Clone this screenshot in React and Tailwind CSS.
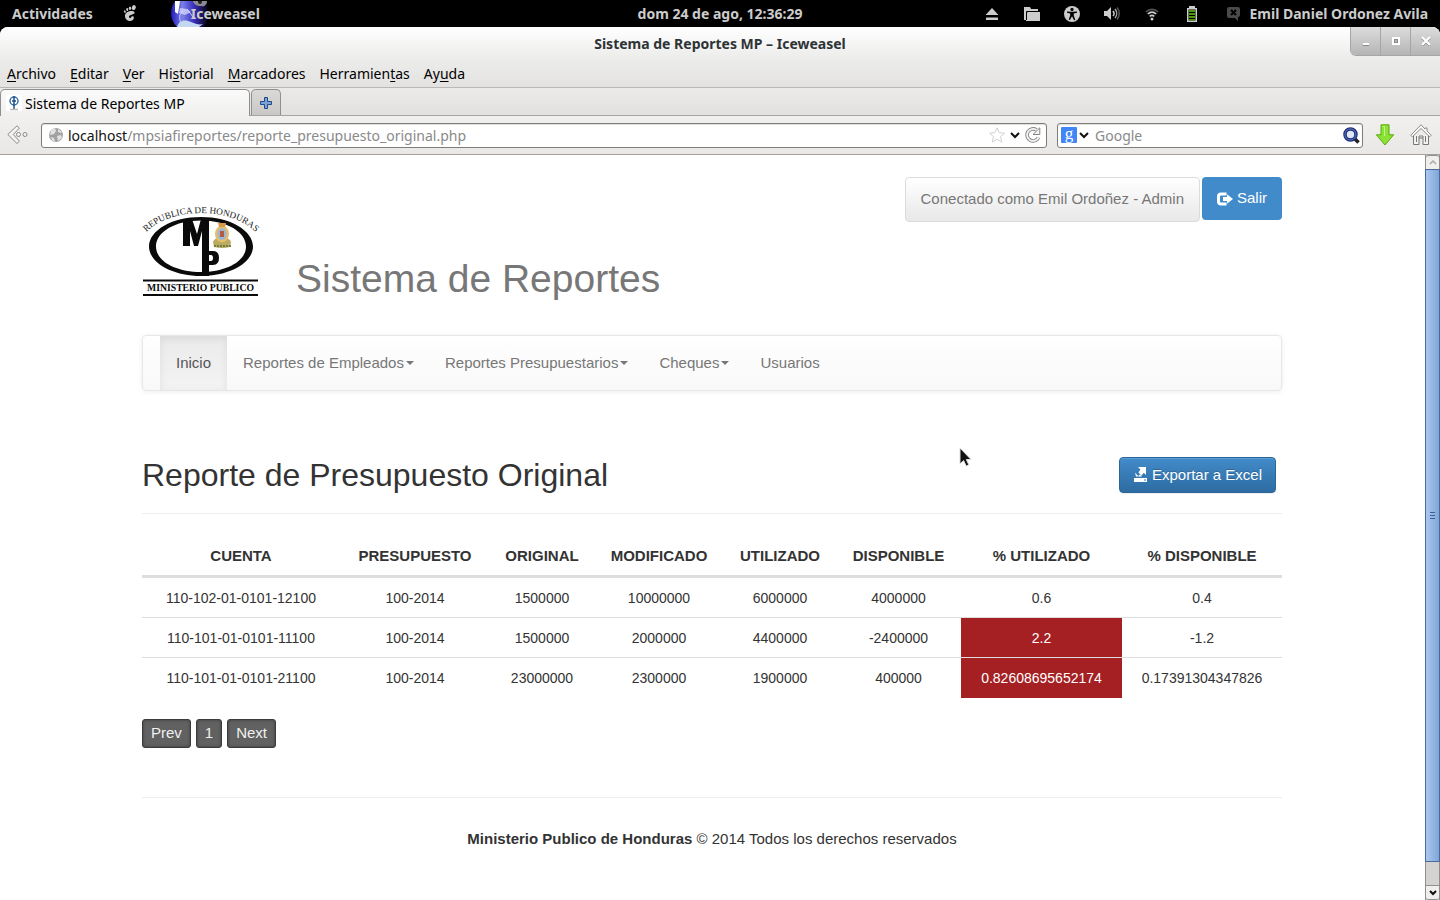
const uiFont = "font-['Noto_Sans',sans-serif]";

function FootIcon() {
  return (
    <svg width="14" height="17" viewBox="0 0 14 17" fill="#ccc" aria-hidden="true">
      <ellipse cx="10.800" cy="2.600" rx="1.900" ry="2.500" transform="rotate(20 10.800 2.600)" />
      <ellipse cx="7" cy="3.200" rx="1.200" ry="1.800" />
      <ellipse cx="4.200" cy="4.600" rx="1" ry="1.500" transform="rotate(-15 4.200 4.600)" />
      <ellipse cx="1.900" cy="6.600" rx=".9" ry="1.300" transform="rotate(-25 1.900 6.600)" />
      <path d="M8.500 6C4.500 6 1.600 8.400 2 11.500c.3 2.800 2.400 4.600 4.900 4.600 2.300 0 4.200-1.600 4-3.500-.1-1-.9-1.500-1.700-1.300-1 .2-.8 1.700-2 1.700-1 0-1.500-.9-1.100-1.700.6-1.300 5.500-1.700 5.500-3.700C11.600 6.500 10.300 6 8.500 6z" />
    </svg>
  );
}

function IceweaselIcon() {
  return (
    <svg width="38" height="26" viewBox="0 0 38 26" aria-hidden="true">
      <defs>
        <linearGradient id="globe" x1="0" y1="0" x2="1" y2="0">
          <stop offset="0" stopColor="#2018b8" />
          <stop offset=".3" stopColor="#7a80e6" />
          <stop offset=".6" stopColor="#3a30c0" />
          <stop offset="1" stopColor="#000" />
        </linearGradient>
      </defs>
      <circle cx="19" cy="12" r="19" fill="url(#globe)" />
      <path d="M4 0h5L7 13l-3-2z" fill="#fff" />
      <path d="M6 26c2-7 8-8 14-5 5 2 8 3 12 2l-4 3z" fill="#c4d8f4" />
      <path d="M9 7l7 1 4 3-6 3-6-2z" fill="#dfe2ff" opacity=".7" />
      <path d="M22 0h14c0 4-3 6-6 5-4 0-7-1-8-5z" fill="#8a8a90" />
      <circle cx="29" cy="1" r="2" fill="#222" />
      <path d="M10 22c-2-5-2-9 2-12M16 8l6 8" stroke="#cfd0ff" strokeWidth="1" fill="none" />
    </svg>
  );
}

function TrayIcons() {
  return (
    <div className="flex items-center gap-6" aria-hidden="true">
      <svg width="16" height="16" viewBox="0 0 16 16" fill="#ccc"><path d="M8 2l6.500 7h-13zM2 11.500h12v2.500H2z" /></svg>
      <svg width="16" height="16" viewBox="0 0 16 16" fill="#ccc"><path d="M0 1h6l1 2h7v2H3v9H0z" /><path d="M4 6h12v9H2V7l2-1z" /><path d="M2.500 14V5.500H14" stroke="#000" fill="none" /></svg>
      <svg width="16" height="16" viewBox="0 0 16 16"><circle cx="8" cy="8" r="8" fill="#ccc" /><circle cx="8" cy="3.400" r="1.600" /><path d="M3 5.500l4 .3h2l4-.3v1.200l-3.200.8v2.300l1.500 4-1.200.5L8 10.300l-2.100 3.800-1.200-.5 1.500-4V7.500L3 6.700z" /></svg>
      <svg width="16" height="16" viewBox="0 0 16 16" fill="#ccc"><path d="M0 5h3l4-4v13l-4-4H0z" /><path d="M9 5c1.300 1.600 1.300 3.600 0 5" stroke="#ccc" strokeWidth="1.500" fill="none" /><path d="M11 3c2.200 2.600 2.200 6.400 0 9" stroke="#aaa" strokeWidth="1.500" fill="none" /><path d="M13 1.500c3 3.400 3 8.600 0 12" stroke="#555" strokeWidth="1.500" fill="none" /></svg>
      <svg width="16" height="16" viewBox="0 0 16 16" fill="none" strokeWidth="1.700"><path d="M2 6c3.500-3.600 8.500-3.600 12 0" stroke="#555" /><path d="M3.800 8c2.500-2.400 5.900-2.400 8.400 0" stroke="#ccc" /><path d="M5.700 10.300c1.500-1.200 3.100-1.200 4.600 0" stroke="#ccc" /><circle cx="8" cy="13" r="1.500" fill="#ccc" /></svg>
      <svg width="16" height="16" viewBox="0 0 16 16"><path d="M5 0h6v2h2v14H3V2h2z" fill="#ccc" /><path d="M4.500 3.500h7v11h-7z" fill="#000" /><path d="M5 4h6v2H5zM5 7h6v2H5zM5 10h6v2H5zM5 13h6v1.500H5z" fill="#4e9a06" /></svg>
    </div>
  );
}

function TopBar() {
  return (
    <header className={`flex h-[27px] items-center bg-black text-[14px] font-bold text-[#ccc] ${uiFont}`}>
      <div className="flex flex-1 items-center pl-3">
        <button type="button">Actividades</button>
        <span className="ml-[30px]"><FootIcon /></span>
        <button type="button" className="relative ml-[34px] flex h-[26px] items-center pl-5">
          <span className="absolute top-0 left-0"><IceweaselIcon /></span>
          <span className="relative">Iceweasel</span>
        </button>
      </div>
      <time>dom 24 de ago, 12:36:29</time>
      <div className="flex flex-1 items-center justify-end pr-3">
        <TrayIcons />
        <button type="button" className="ml-[26px] flex items-center gap-2">
          <svg width="16" height="16" viewBox="0 0 16 16" aria-hidden="true"><path d="M3 1h9q2 0 2 2v6q0 2-2 2v4l-3-3H3q-2 0-2-2V3q0-2 2-2z" fill="#4a4a4a" /><path d="M5 4l5 5M10 4l-5 5" stroke="#000" strokeWidth="2" /></svg>
          Emil Daniel Ordonez Avila
        </button>
      </div>
    </header>
  );
}

function TitleBar() {
  const btn = "flex h-7 w-[30px] items-center justify-center border-l border-[#a5a5a5] bg-linear-to-b from-[#dcdcdc] to-[#b5b5b5]";
  return (
    <div className="flex items-start">
      <div className="flex-1" />
      <h1 className="pt-2 text-[14px] leading-[18px] font-bold text-[#2e3436]">Sistema de Reportes MP – Iceweasel</h1>
      <div className="flex flex-1 justify-end">
        <div className="flex overflow-hidden rounded-bl-md border-b border-[#a5a5a5]">
          <button type="button" aria-label="Minimizar" className={btn}><svg width="10" height="10"><path d="M2 7h6v2H2z" fill="#fff" /><path d="M2 9h6v1H2z" fill="#888" /></svg></button>
          <button type="button" aria-label="Maximizar" className={btn}><svg width="10" height="10"><path d="M2 2h6v6H2z" fill="#8a8a8a" stroke="#fff" strokeWidth="2" /><path d="M4 4h2v2H4z" fill="#b5b5b5" /></svg></button>
          <button type="button" aria-label="Cerrar" className={btn}><svg width="10" height="10"><path d="M1 2l8 8M9 2L1 10" stroke="#8a8a8a" strokeWidth="2" /><path d="M1 1l8 8M9 1L1 9" stroke="#fff" strokeWidth="2.200" /></svg></button>
        </div>
      </div>
    </div>
  );
}

const menus = [["", "A", "rchivo"], ["", "E", "ditar"], ["", "V", "er"], ["Hi", "s", "torial"], ["", "M", "arcadores"], ["Herramien", "t", "as"], ["Ay", "u", "da"]];

function MenuBar() {
  return (
    <nav aria-label="Menú" className="flex h-[28px] items-center gap-[14px] pl-[7px] text-[14px] text-black">
      {menus.map(([a, b, c]) => (
        <button type="button" key={a + b + c}>{a}<span className="underline underline-offset-2">{b}</span>{c}</button>
      ))}
    </nav>
  );
}

function TabStrip() {
  return (
    <div className="flex h-[29px] items-end border-t border-b border-t-[#b8b8b6] border-b-[#a5a5a3] bg-linear-to-b from-[#ebeae9] to-[#e2e1df]">
      <button type="button" className="-mb-px flex h-[27px] w-[250px] items-center gap-[3px] rounded-t-[5px] border border-b-0 border-[#8f8f8d] bg-linear-to-b from-[#fafafa] to-[#f1f0ef] pl-[5px] text-[14px] text-black">
        <svg width="16" height="16" viewBox="0 0 16 16" aria-hidden="true"><rect width="16" height="16" fill="#fff" /><circle cx="8" cy="6" r="4" fill="none" stroke="#3a6ea5" strokeWidth="1.500" /><path d="M8 1v9M6 6h4M8 10v4" stroke="#1d4f88" strokeWidth="1.500" /><path d="M4 14.500h8" stroke="#bbb" strokeWidth="1.500" /></svg>
        Sistema de Reportes MP
      </button>
      <button type="button" aria-label="Nueva pestaña" className="ml-px flex h-[26px] w-[30px] items-center justify-center rounded-t-[5px] border border-b-0 border-[#8f8f8d] bg-linear-to-b from-[#dad9d8] to-[#c9c8c7]">
        <svg width="12" height="12" viewBox="0 0 12 12"><path d="M4.500.5h3v4h4v3h-4v4h-3v-4h-4v-3h4z" fill="#7ba2d6" stroke="#204a87" /></svg>
      </button>
    </div>
  );
}

function ChevronDown() {
  return <svg width="10" height="7" viewBox="0 0 10 7" aria-hidden="true"><path d="M1 1l4 4 4-4" fill="none" stroke="#111" strokeWidth="2" /></svg>;
}

function NavBar() {
  const box = "flex h-[25px] items-center rounded-[3px] border border-[#7d7d7b] bg-white shadow-[inset_0_1px_1px_#ddd]";
  return (
    <div className="flex h-[39px] items-center border-b border-[#a5a09c] bg-linear-to-b from-[#f1f0ef] to-[#e9e8e6] pl-[7px] text-[14px]">
      <button type="button" aria-label="Atrás">
        <svg width="22" height="20" viewBox="0 0 22 20"><path d="M10 .8L.8 9.500l9.200 9 2.400-2.300-6.200-6.700 6.200-6.400z" fill="#f4f4f3" stroke="#8a8a88" /><circle cx="11.500" cy="9.500" r="2" fill="#f4f4f3" stroke="#8a8a88" /><circle cx="18" cy="9.500" r="2" fill="#f4f4f3" stroke="#8a8a88" /></svg>
      </button>
      <div className={`${box} ml-3 flex-1 pr-[5px] pl-[6px]`}>
        <svg width="16" height="16" viewBox="0 0 16 16" aria-hidden="true"><circle cx="8" cy="8" r="7" fill="#a2a2a2" /><path d="M3 3l4-2 1 3-2 3-4 1zM9 9l4-1 1 3-4 3zM10 2l4 3-1 1-3-1zM3 10l3 1 1 4-3-2z" fill="#e2e2e2" /></svg>
        <a href="#url" className="ml-1 flex-1 truncate text-[#8a8a8a]"><span className="text-[#111]">localhost</span>/mpsiafireportes/reporte_presupuesto_original.php</a>
        <svg width="16" height="16" viewBox="0 0 16 16" aria-hidden="true"><path d="M8 .8l2.200 4.900 5.300.5-4 3.500 1.300 5.400L8 12.300l-4.800 2.800 1.300-5.400-4-3.500 5.300-.5z" fill="#fff" stroke="#d0d0d0" /></svg>
        <span className="ml-[5px]"><ChevronDown /></span>
        <svg className="ml-[5px]" width="16" height="16" viewBox="0 0 16 16" aria-hidden="true"><path d="M13.500 10.500A6 6 0 1 1 11.500 3" fill="none" stroke="#858585" strokeWidth="3.600" /><path d="M13.500 10.500A6 6 0 1 1 11.500 3" fill="none" stroke="#f4f4f4" strokeWidth="1.800" /><path d="M14.800.8v6.700H8z" fill="#f4f4f4" stroke="#858585" /></svg>
      </div>
      <div className={`${box} mr-[11px] ml-[10px] w-[306px] pr-[2px] pl-[3px]`}>
        <span className="flex h-4 w-4 items-center justify-center rounded-[1px] bg-[#4285f4] pb-1 font-['Liberation_Serif',serif] text-[17px] leading-none text-white">g</span>
        <span className="ml-[2px]"><ChevronDown /></span>
        <input aria-label="Buscar" placeholder="Google" className="ml-[6px] min-w-0 flex-1 outline-none placeholder:text-[#8a8a8a]" />
        <svg width="17" height="17" viewBox="0 0 17 17" aria-hidden="true"><path d="M11 11l4.500 4.500" stroke="#222" strokeWidth="3.500" /><circle cx="7.500" cy="7.500" r="5.500" fill="#dfe6f6" stroke="#1c2a6b" strokeWidth="3.500" /><circle cx="7.500" cy="7.500" r="5.500" fill="none" stroke="#4a66b8" strokeWidth="1.300" /></svg>
      </div>
      <button type="button" aria-label="Descargas" className="ml-px">
        <svg width="20" height="22" viewBox="0 0 20 22"><path d="M6 .8h8v10h4.700L10 21 1.300 10.800H6z" fill="#8ae234" stroke="#5aa90c" /><path d="M7.500 2.500h2V12" fill="none" stroke="#c5f58f" /></svg>
      </button>
      <button type="button" aria-label="Inicio" className="mr-2 ml-[15px]">
        <svg width="22" height="22" viewBox="0 0 22 22"><path d="M3.500 11v9.500H9V14h4v6.500h5.500V11" fill="#f2f2f1" stroke="#777" /><path d="M6.500 18v-6M15.500 18v-6M9 14v-2h4v2" fill="none" stroke="#777" /><path d="M11 .8L.8 11.300l1.500 1.500L11 4.500l8.700 8.300 1.500-1.500L17 7V4h-2v1z" fill="#fafafa" stroke="#8c8c8c" /></svg>
      </button>
    </div>
  );
}

function Logo() {
  return (
    <svg width="120" height="96" viewBox="0 0 120 96" role="img" aria-label="Ministerio Publico, Republica de Honduras">
      <defs><path id="arc" d="M2 37C26 5 96 5 120 37" /></defs>
      <text fontFamily="Liberation Serif, serif" fontSize="9.200" fill="#222" textAnchor="middle">
        <textPath href="#arc" startOffset="50%">REPUBLICA DE HONDURAS</textPath>
      </text>
      <path fillRule="evenodd" fill="#0a0a0a" d="M61 17c29 0 52 13.500 52 29.500S90 76 61 76 9 62.500 9 46.500 32 17 61 17zm0 3.500c-26 0-45 11.500-45 26S35 72 61 72s45-11 45-25.500-19-26-45-26z" />
      <path fill="#0a0a0a" d="M43 19h9l5 15 4-15h8v57h-7V31l-4 15h-4l-4-15v15h-7z" />
      <path fill="#0a0a0a" fillRule="evenodd" d="M66 51h7q6 0 6 7t-6 7h-7v-4h5q2 0 2-3t-2-3h-5z" />
      <g>
        <path d="M73 42q2-5 6-3l3 3 3-3q4-2 6 3l-1 5q-8 2-16 0z" fill="#b9ab62" />
        <ellipse cx="82" cy="34" rx="7" ry="8.500" fill="#e3bf6c" />
        <ellipse cx="82" cy="34" rx="4.500" ry="6" fill="#9db6d3" />
        <path d="M80 31h4v6h-4z" fill="#b55a45" />
        <path d="M78 23h8l-1 4h-6z" fill="#d79b48" />
        <path d="M74 46h17" stroke="#718042" strokeWidth="2" strokeDasharray="2 1" />
      </g>
      <path d="M3 80.500h115M3 95h115" stroke="#0a0a0a" strokeWidth="2" />
      <text x="60.500" y="91" textAnchor="middle" fontFamily="Liberation Serif, serif" fontWeight="700" fontSize="9.700" fill="#0a0a0a">MINISTERIO PUBLICO</text>
    </svg>
  );
}

function Caret() {
  return <span className="ml-[2px] inline-block border-x-4 border-t-4 border-x-transparent border-t-[#777] align-middle" />;
}

const links = [["Reportes de Empleados", true], ["Reportes Presupuestarios", true], ["Cheques", true], ["Usuarios", false]];

function SiteNav() {
  return (
    <nav aria-label="Principal" className="mt-[39px] flex h-14 gap-px rounded border border-[#e7e7e7] bg-linear-to-b from-white to-[#f8f8f8] pl-[17px] text-[15px] text-[#777] shadow-[0_1px_5px_rgba(0,0,0,0.075)]">
      <a href="#inicio" className="flex items-center bg-linear-to-b from-[#ebebeb] to-[#f3f3f3] px-4 text-[#555] shadow-[inset_0_3px_9px_rgba(0,0,0,0.075)]">Inicio</a>
      {links.map(([label, caret]) => (
        <a key={label} href="#menu" className="flex items-center px-[15px]">{label}{caret && <Caret />}</a>
      ))}
    </nav>
  );
}

const columns = [
  ["CUENTA", "w-[198px]"], ["PRESUPUESTO", "w-[150px]"], ["ORIGINAL", "w-[104px]"], ["MODIFICADO", "w-[130px]"],
  ["UTILIZADO", "w-[112px]"], ["DISPONIBLE", "w-[125px]"], ["% UTILIZADO", "w-[161px]"], ["% DISPONIBLE", "w-[160px]"],
];
const rows = [
  ["110-102-01-0101-12100", "100-2014", "1500000", "10000000", "6000000", "4000000", "0.6", "0.4"],
  ["110-101-01-0101-11100", "100-2014", "1500000", "2000000", "4400000", "-2400000", "2.2", "-1.2"],
  ["110-101-01-0101-21100", "100-2014", "23000000", "2300000", "1900000", "400000", "0.82608695652174", "0.17391304347826"],
];

function Report() {
  return (
    <section>
      <div className="mt-[62px] flex items-center justify-between border-b border-[#eee] pr-[6px] pb-[16px]">
        <h2 className="text-[32px] leading-[44px] text-[#333]">Reporte de Presupuesto Original</h2>
        <button type="button" className="flex h-9 items-center gap-1 rounded border border-[#2b669a] bg-linear-to-b from-[#428bca] to-[#2d6ca2] px-[13px] text-[15px] text-white shadow-[inset_0_1px_0_rgba(255,255,255,0.15),0_1px_1px_rgba(0,0,0,0.075)] text-shadow-[0_-1px_0_rgba(0,0,0,0.2)]">
          <svg width="15" height="16" viewBox="0 0 15 16" fill="#fff" aria-hidden="true"><path d="M5 0h8v8l-2.200-2.200-2.300 2.700-3-3L7.500 2.500zM2 5.500L5.500 9.500H3zM1 11h13v4H1zM5 9l2-1.500L9 9.500H6z" /><path d="M11 12.500h2v1h-2z" fill="#3a78b0" /></svg>
          Exportar a Excel
        </button>
      </div>
      <table className="mt-[21px] w-full table-fixed border-collapse text-center text-[14px] leading-5 text-[#333]">
        <thead>
          <tr className="border-b-[3px] border-[#ddd] text-[15px]">
            {columns.map(([name, width]) => <th key={name} scope="col" className={`${width} pt-[11px] pb-[9px] font-bold`}>{name}</th>)}
          </tr>
        </thead>
        <tbody>
          {rows.map((row, r) => (
            <tr key={row[0]} className="h-10 border-b border-[#ddd] first:h-[41px] last:border-b-0">
              {row.map((cell, c) => <td key={c} className={c === 6 && r > 0 ? "bg-[#a52022] text-white" : ""}>{cell}</td>)}
            </tr>
          ))}
        </tbody>
      </table>
      <div className="mt-[21px] flex gap-[5px] text-[15px] text-[#f0f0f0]">
        {["Prev", "1", "Next"].map((t) => (
          <button type="button" key={t} className="h-[29px] rounded-[3px] border border-[#3b3b3b] bg-[#616161] px-2 shadow-[inset_0_0_3px_rgba(0,0,0,0.4)]">{t}</button>
        ))}
      </div>
    </section>
  );
}

function Page() {
  return (
    <main className="flex-1 bg-white pr-px font-['Liberation_Sans',Arial,sans-serif]">
      <div className="mx-auto max-w-[1140px] pt-[22px]">
        <header className="flex items-start justify-between">
          <div className="flex items-end pt-[23px] text-[#777]">
            <div className="-ml-[2px]"><Logo /></div>
            <h1 className="ml-9 text-[39px] leading-[34px]">Sistema de Reportes</h1>
          </div>
          <div className="flex items-start gap-[2px] text-[15px]">
            <p className="flex h-[45px] items-center rounded border border-[#dcdcdc] bg-linear-to-b from-white to-[#e8e8e8] px-[15px] text-[#777]">Conectado como Emil Ordoñez - Admin</p>
            <a href="#salir" className="flex h-[43px] items-center gap-1 rounded bg-[#428bca] px-[15px] text-white">
              <svg width="16" height="14" viewBox="0 0 16 14" aria-hidden="true"><path d="M9.500 2H4Q1.500 2 1.500 4.500v5Q1.500 12 4 12h5.500" fill="none" stroke="#fff" strokeWidth="3" /><path d="M6 5h4V2.200L16 7l-6 4.800V9H6z" fill="#fff" /></svg>
              Salir
            </a>
          </div>
        </header>
        <SiteNav />
        <Report />
        <footer className="mt-[49px] border-t border-[#eee] pt-[30px] text-center text-[15px] leading-[21px] text-[#333]">
          <strong>Ministerio Publico de Honduras</strong> © 2014 Todos los derechos reservados
        </footer>
      </div>
    </main>
  );
}

function ScrollBar() {
  return (
    <div className="flex w-[15px] flex-col border-x border-[#8f8f8d] bg-[#d4d3d2]" aria-hidden="true">
      <div className="flex h-[14px] items-center justify-center rounded-t-[3px] border-t border-[#8f8f8d] bg-[#f0efee]"><svg width="8" height="5"><path d="M1 4l3-3 3 3" fill="none" stroke="#aaa" strokeWidth="1.500" /></svg></div>
      <div className="-mx-px flex flex-1 items-center justify-center border border-[#49699a] bg-linear-to-r from-[#aac9ee] to-[#7fa5d9]"><svg width="5" height="8"><path d="M0 .5h5M0 3.500h5M0 6.500h5" stroke="#3c5f92" /></svg></div>
      <div className="h-[23px]" />
      <div className="flex h-[15px] items-center justify-center rounded-b-[3px] border-y border-[#8f8f8d] bg-[#f0efee]"><svg width="8" height="6"><path d="M1 1l3 3 3-3" fill="none" stroke="#111" strokeWidth="2" /></svg></div>
    </div>
  );
}

export default function App() {
  return (
    <div className="flex min-h-screen flex-col bg-black">
      <TopBar />
      <div className="flex flex-1 flex-col overflow-hidden rounded-t-[8px] bg-white">
        <div className={uiFont}>
          <div className="bg-linear-to-b from-white via-[#ededec] to-[#e3e2e0]">
            <TitleBar />
            <div className="pt-[3px]"><MenuBar /></div>
          </div>
          <TabStrip />
          <NavBar />
        </div>
        <div className="flex flex-1"><Page /><ScrollBar /></div>
      </div>
      <svg className="pointer-events-none absolute top-[447px] left-[959px]" width="14" height="20" viewBox="0 0 14 20" aria-hidden="true"><path d="M1 1v16l3.600-3.500L7.200 19l2.600-1.200L7.300 12.500H12z" fill="#111" stroke="#ddd" /></svg>
    </div>
  );
}
